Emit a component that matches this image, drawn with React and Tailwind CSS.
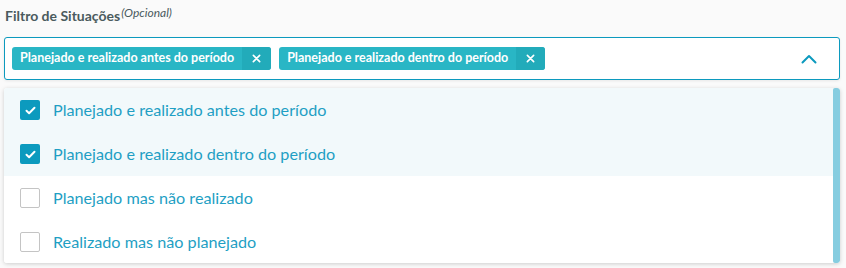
import React from "react";

const tags = [
  "Planejado e realizado antes do período",
  "Planejado e realizado dentro do período",
];

const options = [
  { label: "Planejado e realizado antes do período", checked: true },
  { label: "Planejado e realizado dentro do período", checked: true },
  { label: "Planejado mas não realizado", checked: false },
  { label: "Realizado mas não planejado", checked: false },
];

function Tag({ text }) {
  return (
    <div className="flex items-center h-[23px] rounded-[3px] bg-[#29b6c5] text-white overflow-hidden">
      <span className="px-2 text-[12.5px] font-bold leading-none">{text}</span>
      <span className="flex items-center justify-center w-[29px] h-full bg-[#22abba]">
        <svg width="9" height="9" viewBox="0 0 10 10" fill="none">
          <path d="M1.5 1.5l7 7M8.5 1.5l-7 7" stroke="white" strokeWidth="1.8" strokeLinecap="round" />
        </svg>
      </span>
    </div>
  );
}

function Checkbox({ checked }) {
  if (checked) {
    return (
      <span className="flex items-center justify-center w-5 h-5 rounded-[2px] bg-[#0c9abe]">
        <svg width="11" height="9" viewBox="0 0 11 9" fill="none">
          <path d="M1.5 4.8l2.6 2.4 5.4-5.4" stroke="white" strokeWidth="2" strokeLinecap="round" strokeLinejoin="round" />
        </svg>
      </span>
    );
  }
  return <span className="w-5 h-5 rounded-[2px] border border-[#c4c4c4] bg-white" />;
}

export default function App() {
  return (
    <div className="w-[846px] h-[268px] bg-[#fafafa] px-1 pt-[5px] font-['Lato',sans-serif] overflow-hidden">
      <div className="flex items-start h-[26px] pl-px">
        <span className="text-[14px] font-bold text-[#4a5b5e]">Filtro de Situações</span>
        <span className="text-[12px] italic text-[#4a5b5e] -mt-px ml-px">(Opcional)</span>
      </div>

      <div className="mt-[6px] flex items-center h-[43px] w-[836px] rounded-[3px] border border-[#0c9abe] bg-white pl-[7px] pr-[22px] gap-2 shadow-[0_1px_3px_rgba(0,0,0,0.08)]">
        {tags.map((t) => (
          <Tag key={t} text={t} />
        ))}
        <div className="ml-auto">
          <svg width="16" height="10" viewBox="0 0 16 10" fill="none">
            <path d="M1.5 8.5L8 2l6.5 6.5" stroke="#0c9abe" strokeWidth="2" strokeLinecap="round" strokeLinejoin="round" />
          </svg>
        </div>
      </div>

      <div className="relative mt-[8px] w-[836px] h-[175px] rounded-[3px] bg-white shadow-[0_1px_4px_rgba(0,0,0,0.18)] overflow-hidden">
        {options.map((o) => (
          <div
            key={o.label}
            className={`flex items-center h-[44px] pl-4 gap-[13px] ${o.checked ? "bg-[#f2f9fb]" : "bg-white"}`}
          >
            <Checkbox checked={o.checked} />
            <span className="text-[16.2px] text-[#1f9fc4]">{o.label}</span>
          </div>
        ))}
        <div className="absolute right-0 top-0 w-[7px] h-full rounded-[2px] bg-[#86cde0]" />
      </div>
    </div>
  );
}
